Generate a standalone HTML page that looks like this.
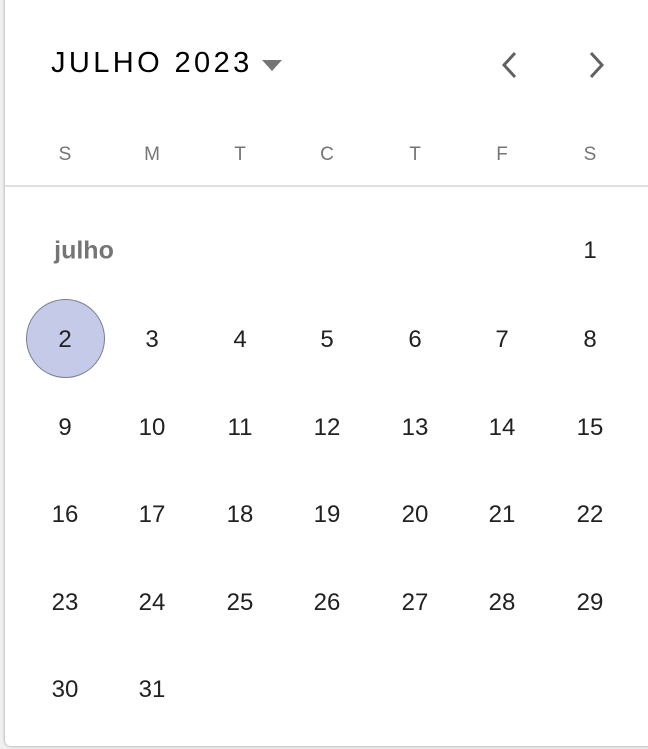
<!DOCTYPE html>
<html><head><style>
body{margin:0;width:648px;height:749px;background:#f0f0f0;position:relative;overflow:hidden;font-family:"Liberation Sans",Roboto,sans-serif}
.p{position:absolute;left:5px;top:-6px;width:650px;height:752px;background:#fff;border-radius:6px;box-shadow:0 0 3px rgba(0,0,0,.35)}
.t{position:absolute;color:#212121;font-size:24px;transform:translate(-50%,-50%);white-space:nowrap}
.w{position:absolute;color:#757575;font-size:19px;transform:translate(-50%,-50%)}
</style></head><body>
<div class="p"></div>
<div style="position:absolute;left:51px;top:47px;font-size:29px;letter-spacing:3.4px;color:#000">JULHO 2023</div>
<svg style="position:absolute;left:260px;top:58px" width="26" height="16"><path d="M2 2h20l-10 11z" fill="#757575"/></svg>
<svg style="position:absolute;left:495px;top:50px" width="115" height="30"><path d="M20 3L9 15l11 12" stroke="#616161" stroke-width="3" fill="none"/><path d="M96 3l11 12-11 12" stroke="#616161" stroke-width="3" fill="none"/></svg>
<div style="position:absolute;left:5px;top:185px;width:643px;height:2px;background:#e0e0e0"></div>
<div style="position:absolute;left:26px;top:299px;width:77px;height:77px;border-radius:50%;background:#c5cae9;border:1.5px solid #7a7f94"></div>
<div class="w" style="left:65px;top:155px">S</div><div class="w" style="left:152px;top:155px">M</div><div class="w" style="left:240px;top:155px">T</div><div class="w" style="left:327px;top:155px">C</div><div class="w" style="left:415px;top:155px">T</div><div class="w" style="left:502px;top:155px">F</div><div class="w" style="left:590px;top:155px">S</div>
<div class="t" style="left:84px;top:251px;color:#757575;font-weight:bold;font-size:25px">julho</div>
<div class="t" style="left:590px;top:251px">1</div>
<div id="g"></div>
<script>
var xs=[65,152,240,327,415,502,590],ys=[340,428,515,603,690],h='';
for(var d=2;d<=31;d++){var i=d-2;h+='<div class="t" style="left:'+xs[i%7]+'px;top:'+ys[Math.floor(i/7)]+'px">'+d+'</div>';}
document.getElementById('g').innerHTML=h;
</script>
</body></html>
